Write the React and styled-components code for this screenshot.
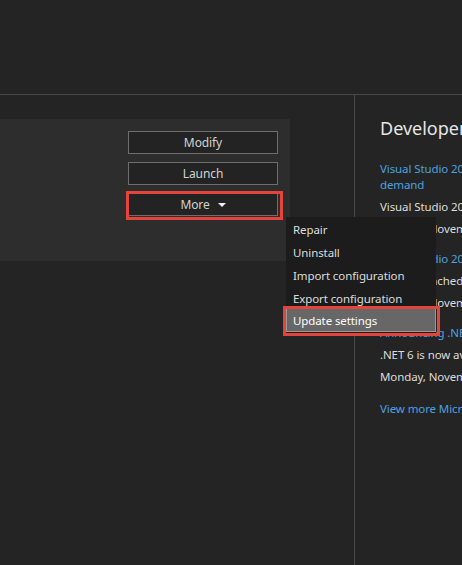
import React from "react";
import styled, { createGlobalStyle } from "styled-components";

const Global = createGlobalStyle`
  html, body { margin: 0; padding: 0; background: #242424; overflow: hidden; }
  body { font-family: "Noto Sans", "Segoe UI", sans-serif; font-size: 11.5px; letter-spacing: -0.1px; color: #dcdcdc; }
`;

const Page = styled.div`
  position: relative;
  width: 462px;
  height: 565px;
  overflow: hidden;
  display: grid;
  grid-template-rows: 95px 1fr;
  background: #242424;
`;

const Header = styled.div`
  border-bottom: 1px solid #474747;
`;

const Body = styled.div`
  display: grid;
  grid-template-columns: 355px 1fr;
  min-height: 0;
`;

const LeftPane = styled.div`
  border-right: 1px solid #474747;
  padding-top: 24px;
`;

const Card = styled.div`
  width: 290px;
  height: 142px;
  box-sizing: border-box;
  background: #2d2d2d;
  padding: 12px 12px 0 0;
  display: flex;
  flex-direction: column;
  align-items: flex-end;
  gap: 8px;
`;

const ButtonWrap = styled.div`
  position: relative;
`;

const Button = styled.button`
  width: 150px;
  height: 23px;
  box-sizing: border-box;
  background: #232323;
  border: 1px solid #6e6e6e;
  color: #d2d2d2;
  font-family: inherit;
  font-size: 12px;
  letter-spacing: -0.1px;
  padding: 0 0 1px;
  display: flex;
  align-items: center;
  justify-content: center;
  gap: 8px;
  cursor: pointer;
`;

const Caret = styled.span`
  width: 0;
  height: 0;
  border-left: 4px solid transparent;
  border-right: 4px solid transparent;
  border-top: 4px solid #f0f0f0;
  margin-top: 1px;
`;

const Highlight = styled.div`
  position: absolute;
  left: ${(p) => p.$l}px;
  top: ${(p) => p.$t}px;
  right: ${(p) => p.$r}px;
  bottom: ${(p) => p.$b}px;
  border: 3px solid #e5443b;
  pointer-events: none;
  z-index: 3;
`;

const Menu = styled.div`
  position: absolute;
  left: 286px;
  top: 217px;
  width: 150px;
  background: #1c1c1c;
  padding-bottom: 2px;
  z-index: 2;
`;

const MenuItem = styled.div`
  position: relative;
  height: ${(p) => (p.$active ? 24 : 23)}px;
  margin-top: ${(p) => (p.$active ? -1 : 0)}px;
  box-sizing: border-box;
  display: flex;
  align-items: center;
  padding-left: ${(p) => (p.$active ? 6 : 7)}px;
  padding-top: 1px;
  color: ${(p) => (p.$active ? "#ffffff" : "#dcdcdc")};
  background: ${(p) => (p.$active ? "#676767" : "transparent")};
  border: ${(p) => (p.$active ? "1px solid #9a9a9a" : "none")};
`;

const RightPane = styled.div`
  padding: 21px 0 0 25px;
  min-width: 0;
`;

const NewsColumn = styled.div`
  width: 320px;
  display: flex;
  flex-direction: column;
`;

const Heading = styled.div`
  font-size: 18px;
  line-height: 24px;
  letter-spacing: 0;
  color: #e6e6e6;
  margin-bottom: 21px;
`;

const NewsItem = styled.div`
  display: flex;
  flex-direction: column;
  gap: 6px;
  margin-bottom: ${(p) => (p.$last ? 16 : 14)}px;
`;

const Link = styled.div`
  color: #4ea1e0;
  line-height: 16px;
  white-space: nowrap;
`;

const Line = styled.div`
  color: #dcdcdc;
  line-height: 16px;
  white-space: nowrap;
`;

const news = [
  {
    title: ["Visual Studio 2022 Launch Event sessions now on", "demand"],
    desc: "Visual Studio 2022 launch sessions are available",
    date: "Monday, November 8, 2021",
  },
  {
    title: ["Visual Studio 2022 is now available"],
    desc: "We've launched globally Visual Studio 2022",
    date: "Monday, November 8, 2021",
  },
  {
    title: ["Announcing .NET 6"],
    desc: ".NET 6 is now available for download",
    date: "Monday, November 8, 2021",
  },
];

export default function App() {
  return (
    <>
      <Global />
      <Page>
        <Header />
        <Body>
          <LeftPane>
            <Card>
              <Button>Modify</Button>
              <Button>Launch</Button>
              <ButtonWrap>
                <Button>
                  More <Caret />
                </Button>
                <Highlight $l={-2} $t={-2} $r={-5} $b={-4} />
              </ButtonWrap>
            </Card>
          </LeftPane>
          <RightPane>
            <NewsColumn>
              <Heading>Developer News</Heading>
              {news.map((n, i) => (
                <NewsItem key={i} $last={i === news.length - 1}>
                  <Link>
                    {n.title.map((t, j) => (
                      <div key={j}>{t}</div>
                    ))}
                  </Link>
                  <Line>{n.desc}</Line>
                  <Line>{n.date}</Line>
                </NewsItem>
              ))}
              <Link>View more Microsoft developer news</Link>
            </NewsColumn>
          </RightPane>
        </Body>
        <Menu>
          <MenuItem>Repair</MenuItem>
          <MenuItem>Uninstall</MenuItem>
          <MenuItem>Import configuration</MenuItem>
          <MenuItem>Export configuration</MenuItem>
          <MenuItem $active>
            Update settings
            <Highlight $l={-4} $t={-3} $r={-5} $b={-5} />
          </MenuItem>
        </Menu>
      </Page>
    </>
  );
}
